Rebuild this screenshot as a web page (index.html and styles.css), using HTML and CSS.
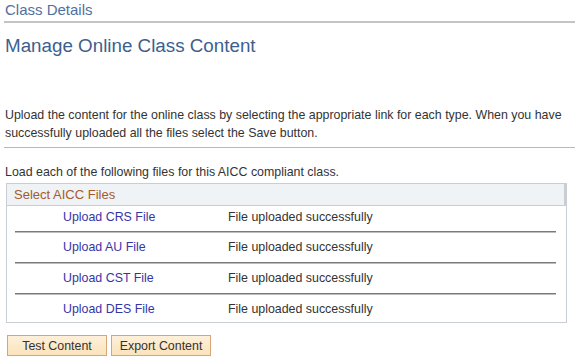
FILE: index.html
```
<!DOCTYPE html>
<html lang="en">
<head>
    <meta charset="UTF-8">
    <meta name="viewport" content="width=device-width, initial-scale=1.0">
    <title>Class Details</title>
    <link rel="stylesheet" href="styles.css">
</head>
<body>
    <div class="page-bar">Class Details</div>
    <h1 class="page-title">Manage Online Class Content</h1>

    <p class="intro">Upload the content for the online class by selecting the appropriate link for each type. When you have successfully uploaded all the files select the Save button.</p>

    <p class="hint">Load each of the following files for this AICC compliant class.</p>

    <div class="files-box">
        <div class="files-head">Select AICC Files</div>
        <div class="file-row">
            <a href="#" class="file-link">Upload CRS File</a>
            <span class="file-status">File uploaded successfully</span>
        </div>
        <div class="file-row">
            <a href="#" class="file-link">Upload AU File</a>
            <span class="file-status">File uploaded successfully</span>
        </div>
        <div class="file-row">
            <a href="#" class="file-link">Upload CST File</a>
            <span class="file-status">File uploaded successfully</span>
        </div>
        <div class="file-row">
            <a href="#" class="file-link">Upload DES File</a>
            <span class="file-status">File uploaded successfully</span>
        </div>
    </div>

    <div class="actions">
        <button type="button">Test Content</button>
        <button type="button">Export Content</button>
    </div>
</body>
</html>
```

FILE: styles.css
```
body {
    margin: 0;
    font-family: "Liberation Sans", Arial, sans-serif;
    font-size: 12.4px;
    color: #333;
    background: #fff;
}
.page-bar {
    margin: 0 4px 0 4px;
    padding: 1px 0 2px 1px;
    font-size: 15px;
    line-height: 18px;
    color: #51709f;
    border-bottom: 2px solid #c4c4c4;
}
.page-title {
    margin: 12px 0 0 5px;
    font-size: 18.8px;
    font-weight: normal;
    line-height: 22px;
    color: #3d5f8f;
}
.intro {
    margin: 49px 4px 0 4px;
    padding: 0 0 5px 1px;
    line-height: 18px;
    border-bottom: 1px solid #b8b8b8;
}
.hint {
    margin: 16px 0 0 5px;
    line-height: 16px;
}
.files-box {
    margin: 3px 12px 0 6px;
    border: 1px solid #c8ced4;
}
.files-head {
    padding: 2px 7px 1px;
    line-height: 18px;
    font-size: 13px;
    color: #a65a2e;
    background: #eff3f5;
    border-bottom: 1px solid #c8ced4;
    border-right: 2px solid #c8ced4;
}
.file-row {
    display: flex;
    margin: 0 10px 1px 8px;
    padding: 5px 0 0 48px;
    height: 24px;
    line-height: 18px;
    border-bottom: 1px solid #7a7a7a;
    box-shadow: 0 1px 0 #bdbdbd;
}
.files-head + .file-row {
    padding-top: 2px;
    height: 23px;
}
.file-row:last-child {
    height: 22px;
    margin-bottom: 0;
    border-bottom: none;
    box-shadow: none;
}
.file-link {
    width: 165px;
    color: #3535a8;
    text-decoration: none;
}
.actions {
    display: flex;
    gap: 4px;
    margin: 12px 0 0 7px;
}
button {
    width: 100px;
    height: 21px;
    padding: 0;
    font-family: inherit;
    font-size: 12.4px;
    color: #333;
    background: linear-gradient(#fdf0da, #fbe3bb);
    border: 1px solid #d8a577;
    border-radius: 0;
    cursor: pointer;
}
```
